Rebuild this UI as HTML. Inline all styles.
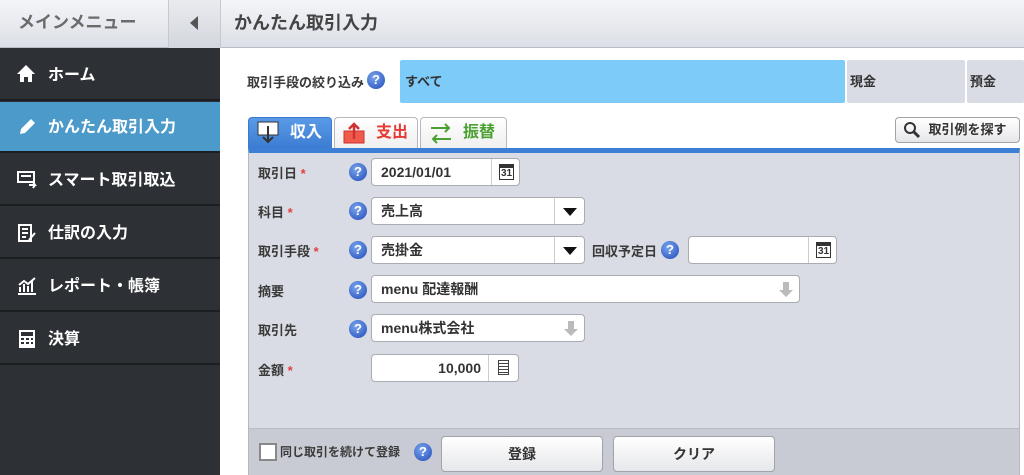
<!DOCTYPE html><html><head><meta charset="utf-8"><style>
*{box-sizing:border-box;margin:0;padding:0}
body{width:1024px;height:475px;overflow:hidden;font-family:"Liberation Sans","Noto Sans CJK JP",sans-serif;background:#fff;position:relative;color:#333}
.a{position:absolute}
.hdr{left:0;top:0;width:1024px;height:48px;background:linear-gradient(#f4f5f8,#dcdfe6);border-bottom:1px solid #b9bcc3}
.side{left:0;top:48px;width:220px;height:427px;background:#2d3034}
.item{left:0;width:220px;height:51px;color:#fff;font-weight:bold;font-size:16px;line-height:51px;padding-left:48px;border-bottom:2px solid #1c1e21}
.q{width:18px;height:18px;border-radius:50%;background:radial-gradient(circle at 40% 35%,#7aa6ee,#2048b8);color:#fff;font-size:13px;font-weight:bold;text-align:center;line-height:18px}
.lab{font-size:13px;font-weight:bold;color:#3a3a3a}
.st{color:#e04040}
.in{background:#fff;border:1px solid #a9acb3;border-radius:4px;font-size:14px;font-weight:bold;color:#333;padding-left:9px;line-height:26px;height:28px}
.btn{background:linear-gradient(#fff,#e6e7ea);border:1px solid #a0a3aa;border-radius:4px;font-size:14px;font-weight:bold;text-align:center;color:#333}
.dd{position:absolute;right:0;top:0;width:30px;height:26px;border-left:1px solid #ccc}
.dd:after{content:"";position:absolute;left:8px;top:10px;border-left:7px solid transparent;border-right:7px solid transparent;border-top:8px solid #111}
.tab{top:117px;height:33px;border:1px solid #b5b8bf;border-bottom:none;border-radius:4px 4px 0 0;background:linear-gradient(#fff,#eee);font-size:16px;font-weight:bold;line-height:30px}
</style></head><body>
<div class="a hdr"></div>
<div class="a" style="left:0;top:0;width:168px;height:48px;font-size:17px;color:#6a6a6a;line-height:46px;padding-left:18px;font-weight:bold">メインメニュー</div>
<div class="a" style="left:168px;top:0;width:52px;height:48px;border-left:1px solid #c6c9cf;background:linear-gradient(#e9ebef,#d3d6dd)"><div class="a" style="left:21px;top:16px;border-top:7px solid transparent;border-bottom:7px solid transparent;border-right:8px solid #555"></div></div>
<div class="a" style="left:220px;top:0;height:48px;border-left:1px solid #c6c9cf"></div>
<div class="a" style="left:234px;top:0;line-height:46px;font-size:18px;font-weight:bold;color:#444">かんたん取引入力</div>
<div class="a side"></div>
<div class="a item" style="top:50px">ホーム</div>
<div class="a item" style="top:102px;background:#4b9ac9;border-bottom-color:#1c1e21">かんたん取引入力</div>
<div class="a item" style="top:155px">スマート取引取込</div>
<div class="a item" style="top:208px">仕訳の入力</div>
<div class="a item" style="top:261px">レポート・帳簿</div>
<div class="a item" style="top:314px">決算</div>
<svg class="a" style="left:16px;top:64px" width="20" height="20"><path d="M10 1L1 10h3v8h4v-5h4v5h4v-8h3z" fill="#fff"/></svg>
<svg class="a" style="left:17px;top:117px" width="20" height="20"><path d="M3 17l1-5L14 2l4 4L8 16z" fill="#fff"/></svg>
<svg class="a" style="left:17px;top:170px" width="22" height="20"><rect x="1" y="2" width="16" height="10" fill="none" stroke="#fff" stroke-width="2"/><path d="M4 6h10M12 15h6l-2-3M18 15l-2 3" stroke="#fff" stroke-width="2" fill="none"/></svg>
<svg class="a" style="left:17px;top:223px" width="20" height="20"><rect x="2" y="2" width="12" height="16" fill="none" stroke="#fff" stroke-width="2"/><path d="M5 6h6M5 10h6M5 14h4M12 17l6-7" stroke="#fff" stroke-width="2"/></svg>
<svg class="a" style="left:16px;top:276px" width="22" height="20"><path d="M2 18h18M4 16v-5M8 16V8M12 16v-6M16 16V5M3 9l5-4 4 3 7-6" stroke="#fff" stroke-width="2" fill="none"/></svg>
<svg class="a" style="left:17px;top:329px" width="20" height="20"><rect x="2" y="1" width="16" height="18" fill="#fff"/><rect x="4" y="3" width="12" height="4" fill="#2d3034"/><path d="M4 10h3M9 10h3M14 10h2M4 14h3M9 14h3M14 14h2" stroke="#2d3034" stroke-width="2"/></svg>
<div class="a lab" style="left:247px;top:72px">取引手段の絞り込み</div>
<div class="a q" style="left:367px;top:71px">?</div>
<div class="a" style="left:400px;top:60px;width:445px;height:43px;background:#7dcbf9;border-radius:2px;font-size:13px;font-weight:bold;line-height:43px;padding-left:5px">すべて</div>
<div class="a" style="left:847px;top:60px;width:118px;height:43px;background:#d9dce4;border-radius:2px;font-size:13px;font-weight:bold;line-height:43px;padding-left:3px">現金</div>
<div class="a" style="left:967px;top:60px;width:57px;height:43px;background:#d9dce4;border-radius:2px;font-size:13px;font-weight:bold;line-height:43px;padding-left:3px">預金</div>
<div class="a tab" style="left:248px;width:84px;background:linear-gradient(#5a9ae6,#3a7bd2);border-color:#3a7bd2;color:#fff;padding-left:41px">収入</div>
<svg class="a" style="left:256px;top:120px" width="26" height="26"><rect x="2" y="2" width="20" height="13" fill="#fff" stroke="#333" stroke-width="1"/><path d="M12 6v16M7 17l5 5 5-5" stroke="#333" stroke-width="2" fill="none"/></svg>
<div class="a tab" style="left:334px;width:84px;color:#e53a32;padding-left:41px">支出</div>
<svg class="a" style="left:342px;top:121px" width="26" height="26"><rect x="2" y="10" width="20" height="12" fill="#f05a4a" stroke="#d03030"/><path d="M12 18V3M7 8l5-5 5 5" stroke="#d03030" stroke-width="2.5" fill="none"/></svg>
<div class="a tab" style="left:420px;width:87px;color:#4aa030;padding-left:42px">振替</div>
<svg class="a" style="left:428px;top:122px" width="26" height="24"><path d="M3 6h18M17 2l4 4-4 4M23 17H5M9 13l-4 4 4 4" stroke="#4aa030" stroke-width="2" fill="none"/></svg>
<div class="a btn" style="left:895px;top:117px;width:125px;height:26px;font-size:13px;line-height:24px;padding-left:20px">取引例を探す</div>
<svg class="a" style="left:903px;top:121px" width="18" height="18"><circle cx="7" cy="7" r="5" fill="none" stroke="#333" stroke-width="2"/><path d="M11 11l5 5" stroke="#333" stroke-width="3"/></svg>
<div class="a" style="left:248px;top:148px;width:772px;height:327px;background:#d9dce4;border:1px solid #b5b8bf;border-top:5px solid #3c7fd4"></div>
<div class="a" style="left:249px;top:428px;width:770px;height:47px;background:#c8cbd3;border-top:1px solid #b9bcc3"></div>
<div class="a lab" style="left:258px;top:163px">取引日 <span class="st">*</span></div>
<div class="a q" style="left:349px;top:163px">?</div>
<div class="a in" style="left:371px;top:158px;width:149px">2021/01/01</div>
<div class="a" style="left:491px;top:159px;width:28px;height:26px;border-left:1px solid #ccc;font-size:10px;font-weight:bold;text-align:center;line-height:28px"><div style="position:absolute;left:7px;top:5px;width:15px;height:16px;border:1px solid #333;border-top:4px solid #333;line-height:11px">31</div></div>
<div class="a lab" style="left:258px;top:202px">科目 <span class="st">*</span></div>
<div class="a q" style="left:349px;top:202px">?</div>
<div class="a in" style="left:371px;top:197px;width:214px">売上高<div class="dd"></div></div>
<div class="a lab" style="left:258px;top:241px">取引手段 <span class="st">*</span></div>
<div class="a q" style="left:349px;top:241px">?</div>
<div class="a in" style="left:371px;top:236px;width:214px">売掛金<div class="dd"></div></div>
<div class="a lab" style="left:592px;top:241px">回収予定日</div>
<div class="a q" style="left:661px;top:241px">?</div>
<div class="a in" style="left:688px;top:236px;width:149px"></div>
<div class="a" style="left:808px;top:237px;width:28px;height:26px;border-left:1px solid #ccc;font-size:10px;font-weight:bold;text-align:center"><div style="position:absolute;left:7px;top:5px;width:15px;height:16px;border:1px solid #333;border-top:4px solid #333;line-height:11px">31</div></div>
<div class="a lab" style="left:258px;top:281px">摘要</div>
<div class="a q" style="left:349px;top:281px">?</div>
<div class="a in" style="left:371px;top:275px;width:429px">menu 配達報酬</div>
<svg class="a" style="left:777px;top:280px" width="18" height="18"><path d="M6 2h6v8h4l-7 7-7-7h4z" fill="#bbb"/></svg>
<div class="a lab" style="left:258px;top:320px">取引先</div>
<div class="a q" style="left:349px;top:320px">?</div>
<div class="a in" style="left:371px;top:314px;width:214px">menu株式会社</div>
<svg class="a" style="left:562px;top:319px" width="18" height="18"><path d="M6 2h6v8h4l-7 7-7-7h4z" fill="#bbb"/></svg>
<div class="a lab" style="left:258px;top:360px">金額 <span class="st">*</span></div>
<div class="a in" style="left:371px;top:354px;width:148px;text-align:right;padding-right:37px">10,000</div>
<div class="a" style="left:488px;top:355px;width:30px;height:26px;border-left:1px solid #ccc"><div style="position:absolute;left:9px;top:5px;width:11px;height:15px;border:1.5px solid #444;background:repeating-linear-gradient(#fff 0 2px,#444 2px 3px)"></div></div>
<div class="a" style="left:259px;top:443px;width:18px;height:18px;background:#fff;border:2px solid #888"></div>
<div class="a lab" style="left:280px;top:443px;font-size:12px">同じ取引を続けて登録</div>
<div class="a q" style="left:414px;top:443px">?</div>
<div class="a btn" style="left:441px;top:436px;width:162px;height:36px;line-height:34px">登録</div>
<div class="a btn" style="left:613px;top:436px;width:162px;height:36px;line-height:34px">クリア</div>
</body></html>
